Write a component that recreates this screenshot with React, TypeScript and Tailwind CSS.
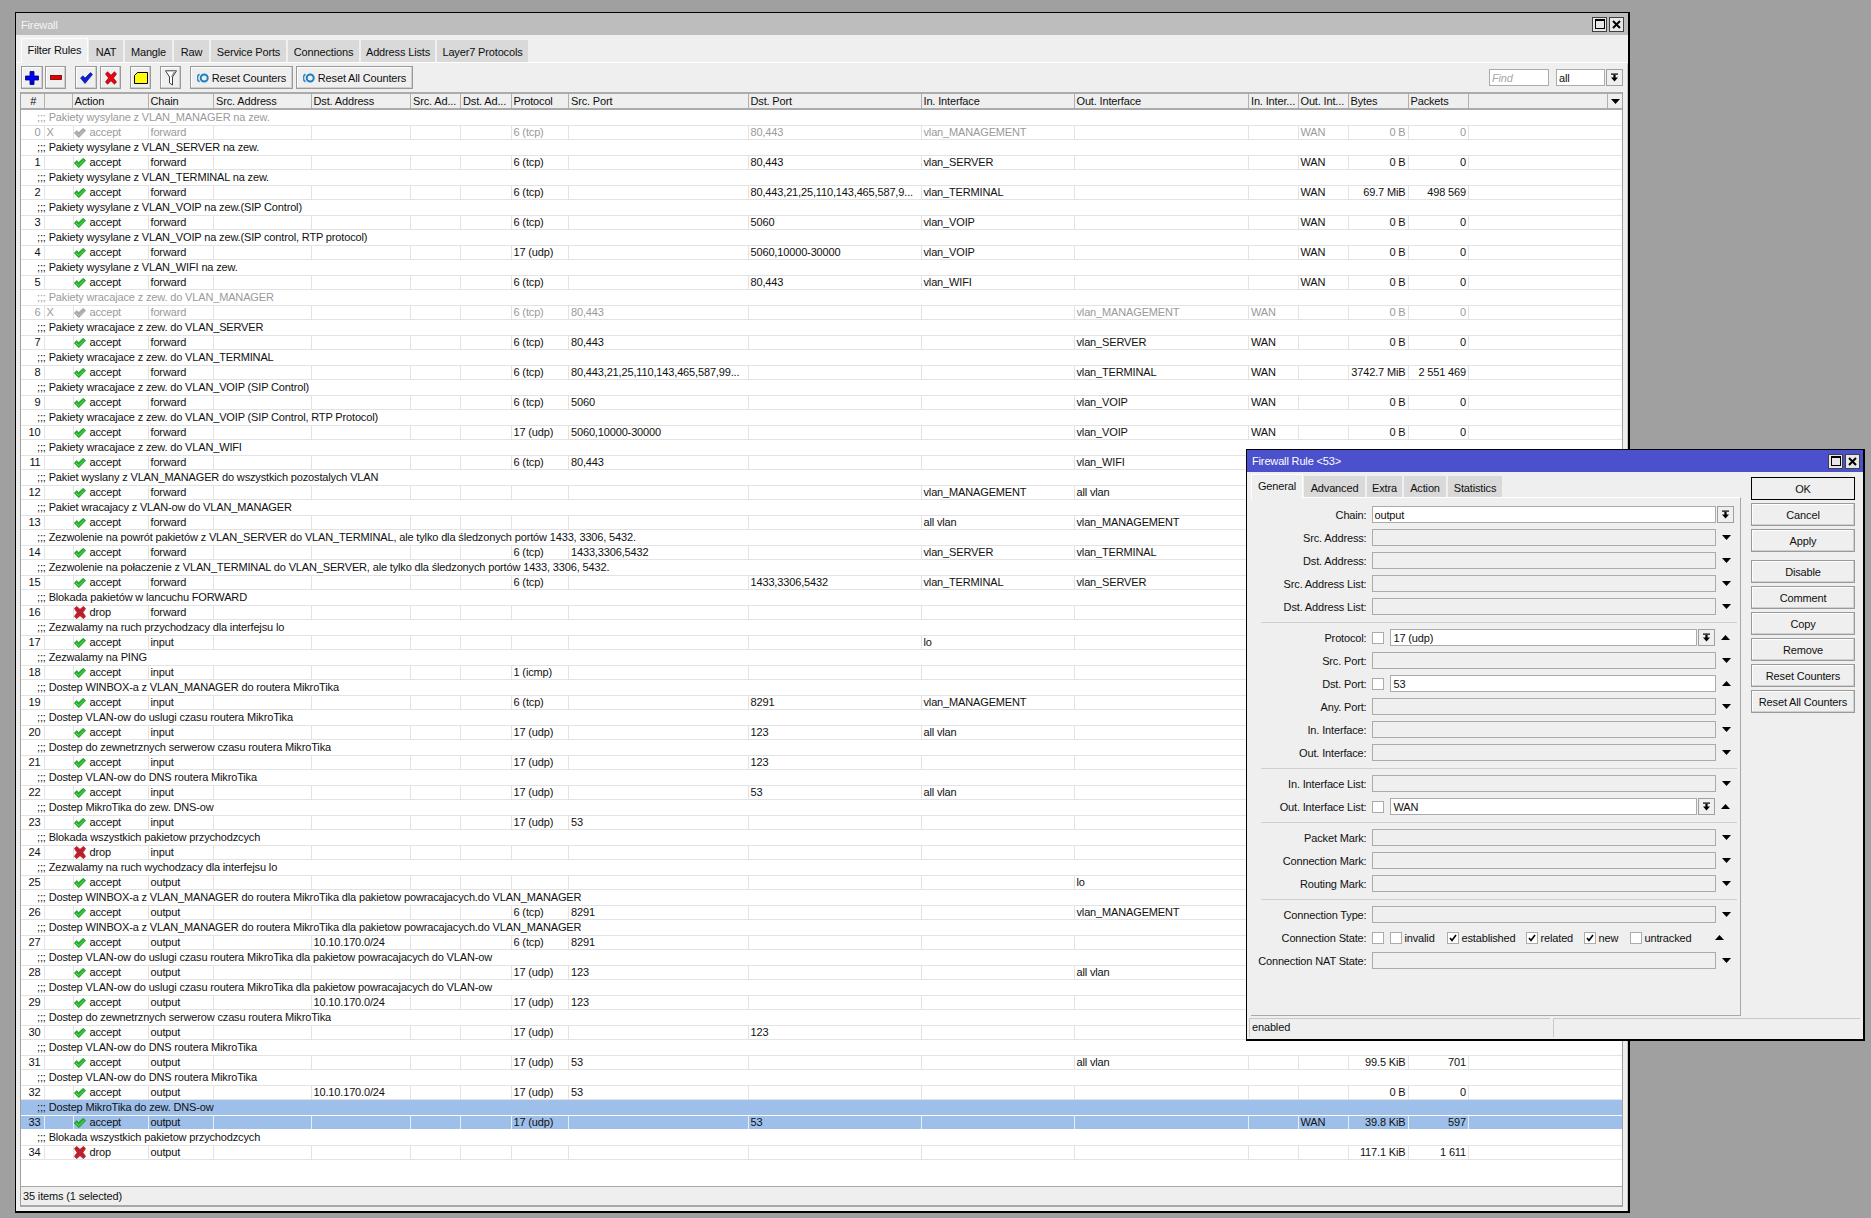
import React from "react";

const ff = { fontFamily: '"Liberation Sans", Arial, sans-serif' };

const cols = [
  { k: "n", w: 23.5, t: "#" },
  { k: "f", w: 28, t: "" },
  { k: "a", w: 76, t: "Action" },
  { k: "c", w: 65.5, t: "Chain" },
  { k: "sa", w: 97.5, t: "Src. Address" },
  { k: "da", w: 99.5, t: "Dst. Address" },
  { k: "sl", w: 50, t: "Src. Ad..." },
  { k: "dl", w: 50.5, t: "Dst. Ad..." },
  { k: "p", w: 57.5, t: "Protocol" },
  { k: "sp", w: 179.5, t: "Src. Port" },
  { k: "dp", w: 173, t: "Dst. Port" },
  { k: "ii", w: 153, t: "In. Interface" },
  { k: "oi", w: 174.5, t: "Out. Interface" },
  { k: "il", w: 49.5, t: "In. Inter..." },
  { k: "ol", w: 50, t: "Out. Int..." },
  { k: "b", w: 60, t: "Bytes" },
  { k: "pk", w: 60.5, t: "Packets" },
];

type R = Partial<Record<string, string>> & { cm: string; dis?: boolean; sel?: boolean };
const F = "forward", I = "input", O = "output", T = "6 (tcp)", U = "17 (udp)";
const rows: R[] = [
  { cm: "Pakiety wysylane z VLAN_MANAGER na zew.", dis: true, a: "accept", c: F, p: T, dp: "80,443", ii: "vlan_MANAGEMENT", ol: "WAN", b: "0 B", pk: "0" },
  { cm: "Pakiety wysylane z VLAN_SERVER na zew.", a: "accept", c: F, p: T, dp: "80,443", ii: "vlan_SERVER", ol: "WAN", b: "0 B", pk: "0" },
  { cm: "Pakiety wysylane z VLAN_TERMINAL na zew.", a: "accept", c: F, p: T, dp: "80,443,21,25,110,143,465,587,9...", ii: "vlan_TERMINAL", ol: "WAN", b: "69.7 MiB", pk: "498 569" },
  { cm: "Pakiety wysylane z VLAN_VOIP na zew.(SIP Control)", a: "accept", c: F, p: T, dp: "5060", ii: "vlan_VOIP", ol: "WAN", b: "0 B", pk: "0" },
  { cm: "Pakiety wysylane z VLAN_VOIP na zew.(SIP control, RTP protocol)", a: "accept", c: F, p: U, dp: "5060,10000-30000", ii: "vlan_VOIP", ol: "WAN", b: "0 B", pk: "0" },
  { cm: "Pakiety wysylane z VLAN_WIFI na zew.", a: "accept", c: F, p: T, dp: "80,443", ii: "vlan_WIFI", ol: "WAN", b: "0 B", pk: "0" },
  { cm: "Pakiety wracajace z zew. do VLAN_MANAGER", dis: true, a: "accept", c: F, p: T, sp: "80,443", oi: "vlan_MANAGEMENT", il: "WAN", b: "0 B", pk: "0" },
  { cm: "Pakiety wracajace z zew. do VLAN_SERVER", a: "accept", c: F, p: T, sp: "80,443", oi: "vlan_SERVER", il: "WAN", b: "0 B", pk: "0" },
  { cm: "Pakiety wracajace z zew. do VLAN_TERMINAL", a: "accept", c: F, p: T, sp: "80,443,21,25,110,143,465,587,99...", oi: "vlan_TERMINAL", il: "WAN", b: "3742.7 MiB", pk: "2 551 469" },
  { cm: "Pakiety wracajace z zew. do VLAN_VOIP (SIP Control)", a: "accept", c: F, p: T, sp: "5060", oi: "vlan_VOIP", il: "WAN", b: "0 B", pk: "0" },
  { cm: "Pakiety wracajace z zew. do VLAN_VOIP (SIP Control, RTP Protocol)", a: "accept", c: F, p: U, sp: "5060,10000-30000", oi: "vlan_VOIP", il: "WAN", b: "0 B", pk: "0" },
  { cm: "Pakiety wracajace z zew. do VLAN_WIFI", a: "accept", c: F, p: T, sp: "80,443", oi: "vlan_WIFI" },
  { cm: "Pakiet wyslany z VLAN_MANAGER do wszystkich pozostalych VLAN", a: "accept", c: F, ii: "vlan_MANAGEMENT", oi: "all vlan" },
  { cm: "Pakiet wracajacy z VLAN-ow do VLAN_MANAGER", a: "accept", c: F, ii: "all vlan", oi: "vlan_MANAGEMENT" },
  { cm: "Zezwolenie na powrót pakietów z VLAN_SERVER do VLAN_TERMINAL, ale tylko dla śledzonych portów 1433, 3306, 5432.", a: "accept", c: F, p: T, sp: "1433,3306,5432", ii: "vlan_SERVER", oi: "vlan_TERMINAL" },
  { cm: "Zezwolenie na połaczenie z VLAN_TERMINAL do VLAN_SERVER, ale tylko dla śledzonych portów 1433, 3306, 5432.", a: "accept", c: F, p: T, dp: "1433,3306,5432", ii: "vlan_TERMINAL", oi: "vlan_SERVER" },
  { cm: "Blokada pakietów w lancuchu FORWARD", a: "drop", c: F },
  { cm: "Zezwalamy na ruch przychodzacy dla interfejsu lo", a: "accept", c: I, ii: "lo" },
  { cm: "Zezwalamy na PING", a: "accept", c: I, p: "1 (icmp)" },
  { cm: "Dostep WINBOX-a z VLAN_MANAGER do routera MikroTika", a: "accept", c: I, p: T, dp: "8291", ii: "vlan_MANAGEMENT" },
  { cm: "Dostep VLAN-ow do uslugi czasu routera MikroTika", a: "accept", c: I, p: U, dp: "123", ii: "all vlan" },
  { cm: "Dostep do zewnetrznych serwerow czasu routera MikroTika", a: "accept", c: I, p: U, dp: "123" },
  { cm: "Dostep VLAN-ow do DNS routera MikroTika", a: "accept", c: I, p: U, dp: "53", ii: "all vlan" },
  { cm: "Dostep MikroTika do zew. DNS-ow", a: "accept", c: I, p: U, sp: "53" },
  { cm: "Blokada wszystkich pakietow przychodzcych", a: "drop", c: I },
  { cm: "Zezwalamy na ruch wychodzacy dla interfejsu lo", a: "accept", c: O, oi: "lo" },
  { cm: "Dostep WINBOX-a z VLAN_MANAGER do routera MikroTika dla pakietow powracajacych.do VLAN_MANAGER", a: "accept", c: O, p: T, sp: "8291", oi: "vlan_MANAGEMENT" },
  { cm: "Dostep WINBOX-a z VLAN_MANAGER do routera MikroTika dla pakietow powracajacych.do VLAN_MANAGER", a: "accept", c: O, da: "10.10.170.0/24", p: T, sp: "8291" },
  { cm: "Dostep VLAN-ow do uslugi czasu routera MikroTika dla pakietow powracajacych do VLAN-ow", a: "accept", c: O, p: U, sp: "123", oi: "all vlan" },
  { cm: "Dostep VLAN-ow do uslugi czasu routera MikroTika dla pakietow powracajacych do VLAN-ow", a: "accept", c: O, da: "10.10.170.0/24", p: U, sp: "123" },
  { cm: "Dostep do zewnetrznych serwerow czasu routera MikroTika", a: "accept", c: O, p: U, dp: "123" },
  { cm: "Dostep VLAN-ow do DNS routera MikroTika", a: "accept", c: O, p: U, sp: "53", oi: "all vlan", b: "99.5 KiB", pk: "701" },
  { cm: "Dostep VLAN-ow do DNS routera MikroTika", a: "accept", c: O, da: "10.10.170.0/24", p: U, sp: "53", b: "0 B", pk: "0" },
  { cm: "Dostep MikroTika do zew. DNS-ow", sel: true, a: "accept", c: O, p: U, dp: "53", ol: "WAN", b: "39.8 KiB", pk: "597" },
  { cm: "Blokada wszystkich pakietow przychodzcych", a: "drop", c: O, b: "117.1 KiB", pk: "1 611" },
];

function Check({ gray }: { gray?: boolean }) {
  return (
    <svg width="12" height="10" viewBox="0 0 12 10" className="shrink-0">
      <path d="M0.3 5 L2.8 2.6 L4.7 4.4 L9.2 0.3 L11.7 2.6 L4.8 9.7 Z" fill={gray ? "#a8a8a8" : "#22b02a"} stroke={gray ? "#a0a0a0" : "#128a1c"} strokeWidth="0.6" />
      <path d="M2 5 L4.8 7.6 L10 2.4" fill="none" stroke={gray ? "#c4c4c4" : "#5fdc5a"} strokeWidth="1" />
    </svg>
  );
}
function Cross() {
  return (
    <svg width="12" height="13" viewBox="0 0 12 13" className="shrink-0">
      <path d="M0.3 2.6 L2.6 0.3 L6 3.2 L9.4 0.3 L11.7 2.6 L9 6.5 L11.7 10.4 L9.4 12.7 L6 9.8 L2.6 12.7 L0.3 10.4 L3 6.5 Z" fill="#bd1f2d" stroke="#a01822" strokeWidth="0.5" />
    </svg>
  );
}
function Drop() {
  return (
    <svg width="9" height="9" viewBox="0 0 9 9" className="shrink-0">
      <rect x="1" y="0.5" width="7" height="1.2" fill="#000" />
      <path d="M3.4 1.7 H5.6 V4.5 H8 L4.5 8.5 L1 4.5 H3.4 Z" fill="#000" />
    </svg>
  );
}
function TriDown() {
  return (
    <svg width="9" height="5" viewBox="0 0 9 5" className="shrink-0"><path d="M0 0 H9 L4.5 5 Z" fill="#000" /></svg>
  );
}
function TriUp() {
  return (
    <svg width="9" height="5" viewBox="0 0 9 5" className="shrink-0"><path d="M0 5 H9 L4.5 0 Z" fill="#000" /></svg>
  );
}
function ResetIcon() {
  return (
    <svg width="12" height="10" viewBox="0 0 12 10" className="shrink-0">
      <path d="M2.5 1.2 A4.4 4.4 0 0 0 2.5 8.8" fill="none" stroke="#2f88c8" strokeWidth="1.6" />
      <circle cx="7.2" cy="5" r="3.5" fill="none" stroke="#1f7fc4" strokeWidth="2" />
    </svg>
  );
}

function WinBtn({ kind }: { kind: "max" | "close" }) {
  return (
    <div className="w-[15px] h-[15px] bg-[#e8e8e8] border border-[#404040] flex items-center justify-center">
      {kind === "max" ? (
        <div className="w-[10px] h-[10px] border border-black border-t-2" />
      ) : (
        <svg width="9" height="9" viewBox="0 0 9 9"><path d="M1 1 L8 8 M8 1 L1 8" stroke="#000" strokeWidth="2" /></svg>
      )}
    </div>
  );
}

function ToolBtn({ w, children }: { w: string; children: React.ReactNode }) {
  return (
    <div className={`${w} h-[23px] shrink-0 bg-[#efefef] border border-[#9a9a9a] shadow-[inset_-1px_-1px_0_#cfcfcf,inset_1px_1px_0_#ffffff] flex items-center justify-center`}>
      {children}
    </div>
  );
}

function Tab({ w, label, active }: { w: string; label: string; active?: boolean }) {
  return active ? (
    <div className={`${w} h-[25px] shrink-0 bg-[#efefef] border-t border-x border-white flex items-center justify-center -mb-px relative pb-px`}>
      {label}
    </div>
  ) : (
    <div className={`${w} h-[22px] shrink-0 bg-[#d9d9d9] border-r border-[#f0f0f0] flex items-center justify-center pt-[2px]`}>{label}</div>
  );
}

function RuleRows() {
  return (
    <div className="flex-1 min-h-0 bg-white overflow-hidden">
      {rows.map((r, i) => {
        const color = r.dis ? "text-[#9a9a9a]" : "text-[#101010]";
        const bg = r.sel ? "bg-[#9dbfe9]" : "";
        const cellLine = r.sel ? "border-[#e6eef8]" : "border-[#e3e3e3]";
        return (
          <div key={i} className={color}>
            <div className={`h-[15px] flex items-center pl-[16px] whitespace-nowrap ${bg}`}>
              <span>;;; {r.cm}</span>
            </div>
            <div className={`h-[15px] flex ${bg} border-y ${r.sel ? "border-white" : "border-[#e3e3e3]"}`}>
              {cols.map((c) => {
                if (c.k === "n")
                  return (
                    <div key={c.k} style={{ width: c.w }} className={`shrink-0 border-r ${cellLine} text-right pr-[3px] leading-[13px]`}>{i}</div>
                  );
                if (c.k === "f")
                  return (
                    <div key={c.k} style={{ width: c.w }} className="shrink-0 pl-[2px] leading-[13px]">{r.dis ? "X" : ""}</div>
                  );
                if (c.k === "a")
                  return (
                    <div key={c.k} style={{ width: c.w }} className={`shrink-0 border-x ${cellLine} flex items-center gap-[4px] leading-[13px]`}>
                      {r.a === "drop" ? <Cross /> : <Check gray={r.dis} />}
                      <span>{r.a}</span>
                    </div>
                  );
                const right = c.k === "b" || c.k === "pk";
                return (
                  <div key={c.k} style={{ width: c.w }} className={`shrink-0 border-r ${cellLine} leading-[13px] whitespace-nowrap overflow-hidden ${right ? "text-right pr-[2px]" : "pl-[2px]"}`}>
                    {r[c.k]}
                  </div>
                );
              })}
            </div>
          </div>
        );
      })}
    </div>
  );
}

function MainWindow() {
  return (
    <div className="ml-[15px] mt-[12px] w-[1615px] h-[1201px] bg-[#efefef] border border-black border-r-2 border-b-2 flex flex-col text-[#101010]">
      <div className="h-[22px] shrink-0 bg-[#bdbdbd] text-[#f4f4f4] flex items-center justify-between pl-[5px] pr-[4px]">
        <span className="pt-[2px]">Firewall</span>
        <div className="flex gap-[2px]">
          <WinBtn kind="max" />
          <WinBtn kind="close" />
        </div>
      </div>
      <div className="h-[28px] shrink-0 flex items-end pl-[5px] gap-px border-b border-white">
        <Tab w="w-[67px]" label="Filter Rules" active />
        <Tab w="w-[35px]" label="NAT" />
        <Tab w="w-[48px]" label="Mangle" />
        <Tab w="w-[36px]" label="Raw" />
        <Tab w="w-[76px]" label="Service Ports" />
        <Tab w="w-[72px]" label="Connections" />
        <Tab w="w-[75px]" label="Address Lists" />
        <Tab w="w-[92px]" label="Layer7 Protocols" />
      </div>
      <div className="flex-1 min-h-0 flex flex-col pl-[5px] pr-[4px] pb-[4px] border-r border-[#c4c4c4]">
        <div className="h-[29px] shrink-0 flex items-center">
          <ToolBtn w="w-[22px]"><svg width="14" height="14" viewBox="0 0 14 14"><path d="M5 0.5 H9 V5 H13.5 V9 H9 V13.5 H5 V9 H0.5 V5 H5 Z" fill="#0000ee" stroke="#00006a" strokeWidth="0.8" /></svg></ToolBtn>
          <div className="ml-[2px]"><ToolBtn w="w-[21px]"><svg width="12" height="5" viewBox="0 0 12 5"><rect x="0.5" y="0.5" width="11" height="4" fill="#e80000" stroke="#6a0000" strokeWidth="0.8" /></svg></ToolBtn></div>
          <div className="ml-[9px]"><ToolBtn w="w-[22px]"><svg width="13" height="12" viewBox="0 0 13 12"><path d="M0.5 6 L3 3.8 L5 6 L10.5 0.5 L12.5 2.5 L5 11.5 Z" fill="#0a1ee0" stroke="#06106e" strokeWidth="0.6" /></svg></ToolBtn></div>
          <div className="ml-[3px]"><ToolBtn w="w-[21px]"><svg width="12" height="14" viewBox="0 0 12 14"><path d="M0.5 3 L2.5 0.8 L6 4.2 L9.5 0.8 L11.5 3 L8.4 7 L11.5 11 L9.5 13.2 L6 9.8 L2.5 13.2 L0.5 11 L3.6 7 Z" fill="#f0000c" stroke="#7d0b10" strokeWidth="0.7" /></svg></ToolBtn></div>
          <div className="ml-[9px]"><ToolBtn w="w-[21px]"><svg width="14" height="12" viewBox="0 0 14 12"><path d="M3.5 0.5 H13.5 V11.5 H0.5 V3.5 Z" fill="#ffff00" stroke="#000" strokeWidth="1" /></svg></ToolBtn></div>
          <div className="ml-[9px]"><ToolBtn w="w-[21px]"><svg width="12" height="16" viewBox="0 0 12 16"><path d="M0.5 0.8 H11.5 L7.5 7 V15 L4.5 13 V7 Z" fill="#fff" stroke="#404040" strokeWidth="1" /><path d="M7 7 L10 2 H8.5 L6 7 Z" fill="#8a8a8a" /></svg></ToolBtn></div>
          <div className="ml-[9px]"><ToolBtn w="w-[103px]"><span className="flex items-center gap-[3px]"><ResetIcon /><span className="pt-px">Reset Counters</span></span></ToolBtn></div>
          <div className="ml-[3px]"><ToolBtn w="w-[117px]"><span className="flex items-center gap-[3px]"><ResetIcon /><span className="pt-px">Reset All Counters</span></span></ToolBtn></div>
          <div className="ml-auto flex items-center">
            <div className="w-[60px] h-[17px] bg-white border border-[#ababab] pl-[2px] leading-[16px] italic text-[#a8a8a8]">Find</div>
            <div className="w-[49px] h-[17px] ml-[7px] bg-white border border-[#ababab] pl-[2px] leading-[16px]">all</div>
            <div className="w-[17px] h-[17px] ml-px bg-[#efefef] border border-[#a0a0a0] flex items-center justify-center"><Drop /></div>
          </div>
        </div>
        <div className="flex-1 min-h-0 flex flex-col border-x border-[#a0a0a0] -ml-px">
          <div className="h-[18px] shrink-0 flex bg-[#efefef] border-y-2 border-[#ababab]">
            {cols.map((c, i) => (
              <div key={c.k} style={{ width: c.w }} className={`shrink-0 leading-[15px] border-r border-[#b0b0b0] whitespace-nowrap overflow-hidden pl-[2px] ${i === 0 ? "text-center pl-0" : ""}`}>{c.t}</div>
            ))}
            <div className="flex-1" />
            <div className="w-[15px] shrink-0 border-l border-[#b0b0b0] flex items-center justify-center"><TriDown /></div>
          </div>
          <RuleRows />
          <div className="h-[21px] shrink-0 border-t border-[#a8a8a8] border-b-2 border-b-[#a8a8a8] pl-[2px] flex items-center bg-[#efefef]">35 items (1 selected)</div>
        </div>
      </div>
    </div>
  );
}

function Label({ t }: { t: string }) {
  return <div className="w-[120.5px] shrink-0 text-right whitespace-nowrap pr-[5px] pt-px">{t}</div>;
}
function Field({ label, up }: { label: string; up?: boolean }) {
  return (
    <div className="h-[17px] flex items-center mb-[6px]">
      <Label t={label} />
      <div className="w-[344px] h-[17px] bg-[#efefef] border border-[#ababab] shrink-0" />
      <div className="ml-[6px]">{up ? <TriUp /> : <TriDown />}</div>
    </div>
  );
}
function Cb({ on }: { on?: boolean }) {
  return (
    <div className="w-[12px] h-[12px] bg-white border border-[#ababab] shrink-0 flex items-center justify-center">
      {on && <svg width="8" height="8" viewBox="0 0 8 8"><path d="M1 4 L3 6.5 L7 1" fill="none" stroke="#000" strokeWidth="1.6" /></svg>}
    </div>
  );
}
function Sep() {
  return <div className="h-[2px] border-b border-[#cfcfcf] ml-[10px] w-[476px] mb-[6px]" />;
}
function DlgBtn({ t, def }: { t: string; def?: boolean }) {
  return (
    <div className={`h-[23px] w-[104px] flex items-center justify-center pt-px bg-[#efefef] ${def ? "border border-black" : "border border-[#9a9a9a] shadow-[inset_-1px_-1px_0_#d0d0d0,inset_1px_1px_0_#ffffff]"}`}>{t}</div>
  );
}

function Dialog() {
  return (
    <div className="absolute left-[1246px] top-[449px] w-[619px] h-[592px] bg-[#efefef] border border-black border-r-2 border-b-2 flex flex-col text-[#101010]">
      <div className="h-[22px] shrink-0 bg-[#4b50cc] text-white flex items-center justify-between pl-[5px] pr-[3px]">
        <span className="pt-px">Firewall Rule &lt;53&gt;</span>
        <div className="flex gap-[2px]">
          <WinBtn kind="max" />
          <WinBtn kind="close" />
        </div>
      </div>
      <div className="flex-1 min-h-0 flex pl-[4px]">
        <div className="w-[490px] shrink-0 flex flex-col">
          <div className="h-[26px] shrink-0 flex items-end gap-px">
            <Tab w="w-[52px]" label="General" active />
            <Tab w="w-[62px]" label="Advanced" />
            <Tab w="w-[36px]" label="Extra" />
            <Tab w="w-[43px]" label="Action" />
            <Tab w="w-[55px]" label="Statistics" />
          </div>
          <div className="flex-1 border-r border-b border-[#a8a8a8] border-t border-t-white pt-[8px] -mt-px">
            <div className="h-[17px] flex items-center mb-[6px]">
              <Label t="Chain:" />
              <div className="w-[344px] h-[17px] bg-white border border-[#ababab] pl-[2px] leading-[16px] shrink-0">output</div>
              <div className="w-[17px] h-[17px] ml-[1px] bg-[#efefef] border border-[#a0a0a0] flex items-center justify-center"><Drop /></div>
            </div>
            <Field label="Src. Address:" />
            <Field label="Dst. Address:" />
            <Field label="Src. Address List:" />
            <Field label="Dst. Address List:" />
            <Sep />
            <div className="h-[17px] flex items-center mb-[6px]">
              <Label t="Protocol:" />
              <Cb />
              <div className="w-[307px] h-[17px] ml-[6px] bg-white border border-[#ababab] pl-[3px] leading-[16px] shrink-0">17 (udp)</div>
              <div className="w-[17px] h-[17px] ml-[1px] bg-[#efefef] border border-[#a0a0a0] flex items-center justify-center"><Drop /></div>
              <div className="ml-[6px]"><TriUp /></div>
            </div>
            <Field label="Src. Port:" />
            <div className="h-[17px] flex items-center mb-[6px]">
              <Label t="Dst. Port:" />
              <Cb />
              <div className="w-[326px] h-[17px] ml-[6px] bg-white border border-[#ababab] pl-[3px] leading-[16px] shrink-0">53</div>
              <div className="ml-[6px]"><TriUp /></div>
            </div>
            <Field label="Any. Port:" />
            <Field label="In. Interface:" />
            <Field label="Out. Interface:" />
            <Sep />
            <Field label="In. Interface List:" />
            <div className="h-[17px] flex items-center mb-[6px]">
              <Label t="Out. Interface List:" />
              <Cb />
              <div className="w-[307px] h-[17px] ml-[6px] bg-white border border-[#ababab] pl-[3px] leading-[16px] shrink-0">WAN</div>
              <div className="w-[17px] h-[17px] ml-[1px] bg-[#efefef] border border-[#a0a0a0] flex items-center justify-center"><Drop /></div>
              <div className="ml-[6px]"><TriUp /></div>
            </div>
            <Sep />
            <Field label="Packet Mark:" />
            <Field label="Connection Mark:" />
            <Field label="Routing Mark:" />
            <Sep />
            <Field label="Connection Type:" />
            <div className="h-[17px] flex items-center mb-[6px]">
              <Label t="Connection State:" />
              <Cb />
              <div className="ml-[6px]"><Cb /></div>
              <span className="ml-[3px] w-[42px] pt-px">invalid</span>
              <Cb on />
              <span className="ml-[3px] w-[64px] pt-px">established</span>
              <Cb on />
              <span className="ml-[3px] w-[43px] pt-px">related</span>
              <Cb on />
              <span className="ml-[3px] w-[31px] pt-px">new</span>
              <Cb />
              <span className="ml-[3px] w-[59px] whitespace-nowrap pt-px">untracked</span>
              <div className="ml-[11px]"><TriUp /></div>
            </div>
            <Field label="Connection NAT State:" />
          </div>
        </div>
        <div className="flex flex-col ml-[10px] pt-[5px] gap-[3px]">
          <DlgBtn t="OK" def />
          <DlgBtn t="Cancel" />
          <DlgBtn t="Apply" />
          <div className="mt-[5px]"><DlgBtn t="Disable" /></div>
          <DlgBtn t="Comment" />
          <DlgBtn t="Copy" />
          <DlgBtn t="Remove" />
          <DlgBtn t="Reset Counters" />
          <DlgBtn t="Reset All Counters" />
        </div>
      </div>
      <div className="h-[23px] shrink-0 flex pt-[2px] pb-[2px] pl-[2px] pr-[3px] gap-[3px]">
        <div className="w-[301px] border-t border-l border-[#c8c8c8] pl-[2px] leading-[17px]">enabled</div>
        <div className="flex-1 border-t border-l border-[#c8c8c8]" />
      </div>
    </div>
  );
}

export default function App() {
  return (
    <div className="relative w-[1871px] h-[1218px] overflow-hidden bg-[#a0a0a0] text-[11px] tracking-[-0.15px]" style={ff}>
      <div className="flow-root">
        <MainWindow />
      </div>
      <Dialog />
    </div>
  );
}
